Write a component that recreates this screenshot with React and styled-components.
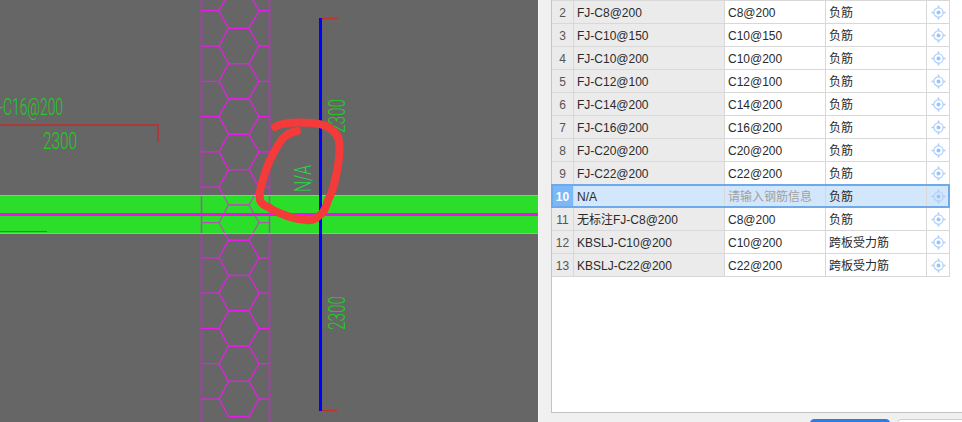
import styled, { createGlobalStyle } from "styled-components";

const GlobalStyle = createGlobalStyle`
  html, body {
    margin: 0;
    padding: 0;
    background: #f0f0f0;
  }
`;

const Page = styled.div`
  display: flex;
  width: 962px;
  height: 422px;
  overflow: hidden;
  font-family: "Liberation Sans", "Noto Sans CJK SC", sans-serif;
  font-size: 12px;
`;

const Drawing = styled.svg`
  flex: none;
  display: block;
  width: 538px;
  height: 422px;
  background: #666666;
`;

const CadText = styled.text`
  font-family: "Roboto", "Liberation Sans", sans-serif;
  font-weight: 300;
  font-size: 24px;
  fill: ${(props) => props.color || "#22cc22"};
`;

const Side = styled.div`
  flex: 1;
  display: flex;
  flex-direction: column;
  padding-left: 12px;
  border-left: 1px solid #f7f7f7;
  min-width: 0;
`;

const Frame = styled.div`
  height: 413px;
  flex: none;
  box-sizing: border-box;
  background: #fff;
  border-left: 1px solid #c4c4c4;
  border-bottom: 1px solid #c0c0c0;
`;

const Grid = styled.div`
  width: 398px;
  border-top: 1px solid #d8d8d8;
`;

const Row = styled.div`
  position: relative;
  display: grid;
  grid-template-columns: 22px 151px 101px 101px 23px;
  height: 23px;
  background: ${(props) => (props.$selected ? "#d3e7fc" : "#fff")};

  ${(props) =>
    props.$selected &&
    `&::after {
      content: "";
      position: absolute;
      left: -1px;
      right: 0;
      top: -1px;
      bottom: 0;
      border: 2px solid #70a9e9;
      pointer-events: none;
    }`}
`;

const Cell = styled.div`
  display: flex;
  align-items: flex-start;
  box-sizing: border-box;
  padding-left: 3px;
  line-height: 24px;
  white-space: nowrap;
  overflow: hidden;
  color: ${(props) => (props.$muted ? "#a0a0a0" : "#2a2a2a")};
  border-right: 1px solid #d8d8d8;
  border-bottom: 1px solid #d8d8d8;
`;

const IndexCell = styled(Cell)`
  justify-content: center;
  padding-left: 0;
  color: ${(props) => (props.$selected ? "#fff" : "#555")};
  font-weight: ${(props) => (props.$selected ? 700 : 400)};
  background: ${(props) => (props.$selected ? "#7ab8f8" : "#ebebeb")};
`;

const NameCell = styled(Cell)`
  background: ${(props) => (props.$selected ? "#d3e7fc" : "#ebebeb")};
`;

const IconCell = styled(Cell)`
  align-items: center;
  justify-content: center;
  padding-left: 0;
`;

const Footer = styled.div`
  display: flex;
  gap: 7px;
  padding: 6px 0 0 259px;
`;

const Button = styled.div`
  flex: none;
  width: 80px;
  height: 28px;
  box-sizing: border-box;
  border-radius: 4px;
  background: ${(props) => (props.$primary ? "#2b7de0" : "#fff")};
  border: 1px solid ${(props) => (props.$primary ? "#2b7de0" : "#cfcfcf")};
`;

const rows = [
  { id: 2, name: "FJ-C8@200", code: "C8@200", type: "负筋" },
  { id: 3, name: "FJ-C10@150", code: "C10@150", type: "负筋" },
  { id: 4, name: "FJ-C10@200", code: "C10@200", type: "负筋" },
  { id: 5, name: "FJ-C12@100", code: "C12@100", type: "负筋" },
  { id: 6, name: "FJ-C14@200", code: "C14@200", type: "负筋" },
  { id: 7, name: "FJ-C16@200", code: "C16@200", type: "负筋" },
  { id: 8, name: "FJ-C20@200", code: "C20@200", type: "负筋" },
  { id: 9, name: "FJ-C22@200", code: "C22@200", type: "负筋" },
  { id: 10, name: "N/A", code: "请输入钢筋信息", type: "负筋", selected: true },
  { id: 11, name: "无标注FJ-C8@200", code: "C8@200", type: "负筋" },
  { id: 12, name: "KBSLJ-C10@200", code: "C10@200", type: "跨板受力筋" },
  { id: 13, name: "KBSLJ-C22@200", code: "C22@200", type: "跨板受力筋" },
];

const hexCentres = Array.from({ length: 12 }, (_, i) => 10.7 + i * 35.3);

function PickIcon() {
  return (
    <svg width="15" height="15" viewBox="0 0 15 15" fill="none">
      <circle cx="7.5" cy="7.5" r="4.6" stroke="#b4d3fa" strokeWidth="1.3" />
      <circle cx="7.5" cy="7.5" r="2" fill="#9cc3f6" />
      <path d="M7.5 0.5v2.4M7.5 12.1v2.4M0.5 7.5h2.4M12.1 7.5h2.4" stroke="#a8ccf8" strokeWidth="1.5" />
    </svg>
  );
}

function Slab() {
  return (
    <Drawing viewBox="0 0 538 422">
      <rect x="0" y="195" width="538" height="39" fill="#2adf2a" />
      <g stroke="#e81ce8" strokeWidth="1.25" fill="none">
        <path d="M201.5 0V422M269.5 0V422" strokeWidth="1.5" stroke="#d022d0" />
        {hexCentres.map((y) => (
          <path
            key={y}
            d={`M201 ${y}H219L228.5 ${y - 17.6}H249L259 ${y}H269M219 ${y}L228.5 ${y + 17.6}H249L259 ${y}`}
          />
        ))}
      </g>
      <rect x="0" y="195" width="538" height="39" fill="#2adf2a" opacity="0.3" />
      <path d="M0 195.5H538M0 233.5H538" stroke="#3fdcdc" strokeWidth="1" />
      <path d="M0 214.5H538" stroke="#f210f2" strokeWidth="3" />
      <path d="M0 231.5H47" stroke="#c4401e" strokeWidth="1" />

      <path d="M0 125H158V142" stroke="#c22c2c" strokeWidth="1.5" fill="none" />
      <path d="M322 18.5H338M322 410.5H337" stroke="#c4302a" strokeWidth="1.5" />
      <path d="M320.5 18V411" stroke="#0000ff" strokeWidth="3" />

      <CadText x="-1" y="115" textLength="64" lengthAdjust="spacingAndGlyphs">-C16@200</CadText>
      <CadText x="43" y="149" textLength="34" lengthAdjust="spacingAndGlyphs">2300</CadText>
      <CadText transform="translate(345 133) rotate(-90)" textLength="34" lengthAdjust="spacingAndGlyphs">2300</CadText>
      <CadText transform="translate(345 330) rotate(-90)" textLength="34" lengthAdjust="spacingAndGlyphs">2300</CadText>
      <CadText transform="translate(311 192) rotate(-90)" textLength="27" lengthAdjust="spacingAndGlyphs" color="#22dd44">N/A</CadText>

      <path
        d="M275 127C282 122 298 122 313 123C324 124 333 128 338 137C341 146 339 165 335 180C333 190 331 195 328 200C326 208 323 213 320 215C315 220 311 221 307 220C301 220 296 219 290 217C282 214 275 212 270 208C265 206 261 204 260 200C259 194 260 189 262 183C264 175 267 167 270 160C274 152 278 144 283 138C287 134 292 132 297 131"
        stroke="#f53a3a"
        strokeWidth="8"
        strokeLinecap="round"
        strokeLinejoin="round"
        fill="none"
      />
    </Drawing>
  );
}

export default function App() {
  return (
    <Page>
      <GlobalStyle />
      <Slab />
      <Side>
        <Frame>
          <Grid>
            {rows.map((row) => (
              <Row key={row.id} $selected={row.selected}>
                <IndexCell $selected={row.selected}>{row.id}</IndexCell>
                <NameCell $selected={row.selected}>{row.name}</NameCell>
                <Cell $muted={row.selected}>{row.code}</Cell>
                <Cell>{row.type}</Cell>
                <IconCell>
                  <PickIcon />
                </IconCell>
              </Row>
            ))}
          </Grid>
        </Frame>
        <Footer>
          <Button $primary />
          <Button />
        </Footer>
      </Side>
    </Page>
  );
}
